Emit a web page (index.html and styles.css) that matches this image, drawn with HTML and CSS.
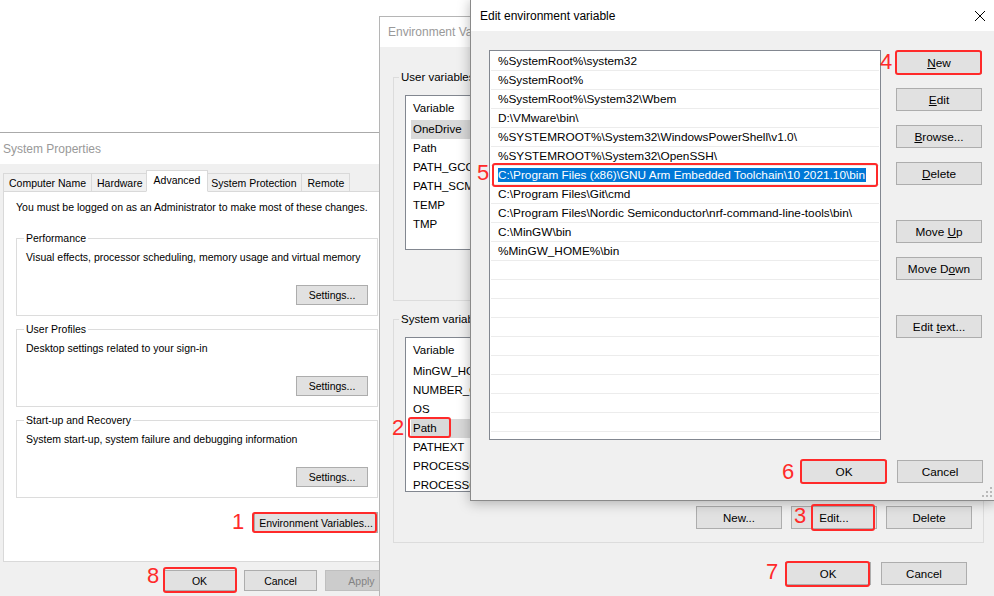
FILE: index.html
```html
<!DOCTYPE html>
<html lang="en">

<head>
    <meta charset="UTF-8">
    <meta name="viewport" content="width=device-width, initial-scale=1.0">
    <title>Environment Variables</title>
    <link rel="stylesheet" href="styles.css">
</head>

<body>
    <div class="desktop">

        <!-- System Properties -->
        <div class="win sysprops">
            <div class="titlebar">System Properties</div>
            <div class="body">
                <ul class="tabs">
                    <li>Computer Name</li>
                    <li>Hardware</li>
                    <li class="active">Advanced</li>
                    <li>System Protection</li>
                    <li>Remote</li>
                </ul>
                <div class="tabpanel">
                    <p class="note">You must be logged on as an Administrator to make most of these changes.</p>
                    <fieldset class="group">
                        <legend>Performance</legend>
                        <p>Visual effects, processor scheduling, memory usage and virtual memory</p>
                        <div class="btnrow"><button class="btn">Settings...</button></div>
                    </fieldset>
                    <fieldset class="group">
                        <legend>User Profiles</legend>
                        <p>Desktop settings related to your sign-in</p>
                        <div class="btnrow"><button class="btn">Settings...</button></div>
                    </fieldset>
                    <fieldset class="group">
                        <legend>Start-up and Recovery</legend>
                        <p>System start-up, system failure and debugging information</p>
                        <div class="btnrow"><button class="btn">Settings...</button></div>
                    </fieldset>
                    <div class="btnrow envrow"><button class="btn wide">Environment Variables...</button></div>
                </div>
                <div class="btnrow footer">
                    <button class="btn">OK</button>
                    <button class="btn">Cancel</button>
                    <button class="btn" disabled>Apply</button>
                </div>
            </div>
        </div>

        <!-- Environment Variables -->
        <div class="win envvars">
            <div class="titlebar">Environment Variables</div>
            <div class="body">
                <fieldset class="group">
                    <legend>User variables for user</legend>
                    <div class="lv">
                        <div class="lv-head">Variable</div>
                        <ul>
                            <li class="sel">OneDrive</li>
                            <li>Path</li>
                            <li>PATH_GCC</li>
                            <li>PATH_SCM</li>
                            <li>TEMP</li>
                            <li>TMP</li>
                        </ul>
                    </div>
                    <div class="btnrow">
                        <button class="btn">New...</button>
                        <button class="btn">Edit...</button>
                        <button class="btn">Delete</button>
                    </div>
                </fieldset>
                <fieldset class="group">
                    <legend>System variables</legend>
                    <div class="lv">
                        <div class="lv-head">Variable</div>
                        <ul>
                            <li>MinGW_HOME</li>
                            <li>NUMBER_OF_PROCESSORS</li>
                            <li>OS</li>
                            <li class="sel">Path</li>
                            <li>PATHEXT</li>
                            <li>PROCESSOR_ARCHITECTURE</li>
                            <li>PROCESSOR_IDENTIFIER</li>
                        </ul>
                    </div>
                    <div class="btnrow">
                        <button class="btn">New...</button>
                        <button class="btn">Edit...</button>
                        <button class="btn">Delete</button>
                    </div>
                </fieldset>
                <div class="btnrow footer">
                    <button class="btn">OK</button>
                    <button class="btn">Cancel</button>
                </div>
            </div>
        </div>

        <!-- Edit environment variable -->
        <div class="win editenv">
            <div class="titlebar">
                <span>Edit environment variable</span>
                <svg class="close" width="10" height="10" viewBox="0 0 10 10">
                    <path d="M0 0L10 10M10 0L0 10" stroke="#000" stroke-width="1" fill="none" />
                </svg>
            </div>
            <div class="body">
                <div class="main">
                    <ul class="pathlist">
                        <li>%SystemRoot%\system32</li>
                        <li>%SystemRoot%</li>
                        <li>%SystemRoot%\System32\Wbem</li>
                        <li>D:\VMware\bin\</li>
                        <li>%SYSTEMROOT%\System32\WindowsPowerShell\v1.0\</li>
                        <li>%SYSTEMROOT%\System32\OpenSSH\</li>
                        <li class="editing"><span>C:\Program Files (x86)\GNU Arm Embedded Toolchain\10 2021.10\bin</span></li>
                        <li>C:\Program Files\Git\cmd</li>
                        <li>C:\Program Files\Nordic Semiconductor\nrf-command-line-tools\bin\</li>
                        <li>C:\MinGW\bin</li>
                        <li>%MinGW_HOME%\bin</li>
                        <li></li>
                        <li></li>
                        <li></li>
                        <li></li>
                        <li></li>
                        <li></li>
                        <li></li>
                        <li></li>
                        <li></li>
                        <li></li>
                    </ul>
                    <div class="side">
                        <button class="btn"><u>N</u>ew</button>
                        <button class="btn"><u>E</u>dit</button>
                        <button class="btn"><u>B</u>rowse...</button>
                        <button class="btn"><u>D</u>elete</button>
                        <button class="btn sep">Move <u>U</u>p</button>
                        <button class="btn">Move D<u>o</u>wn</button>
                        <button class="btn sep">Edit <u>t</u>ext...</button>
                    </div>
                </div>
                <div class="btnrow footer">
                    <button class="btn">OK</button>
                    <button class="btn">Cancel</button>
                </div>
            </div>
            <svg class="grip" width="12" height="12" viewBox="0 0 12 12">
                <g fill="#b9b9b9">
                    <rect x="9" y="1" width="2" height="2" />
                    <rect x="9" y="5" width="2" height="2" />
                    <rect x="5" y="5" width="2" height="2" />
                    <rect x="9" y="9" width="2" height="2" />
                    <rect x="5" y="9" width="2" height="2" />
                    <rect x="1" y="9" width="2" height="2" />
                </g>
            </svg>
        </div>

        <!-- red step marks drawn over the windows -->
        <span class="step s1">1</span><span class="mark m1"></span>
        <span class="step s2">2</span><span class="mark m2"></span>
        <span class="step s3">3</span><span class="mark m3"></span>
        <span class="step s4">4</span><span class="mark m4"></span>
        <span class="step s5">5</span><span class="mark m5"></span>
        <span class="step s6">6</span><span class="mark m6"></span>
        <span class="step s7">7</span><span class="mark m7"></span>
        <span class="step s8">8</span><span class="mark m8"></span>
    </div>
</body>

</html>
```

FILE: styles.css
```css
* {
    margin: 0;
    padding: 0;
    box-sizing: border-box;
}

ul li {
    list-style: none;
}

body {
    background: #fff;
    color: #000;
    font-family: "Liberation Sans", Arial, sans-serif;
    overflow: hidden;
}

.desktop {
    position: relative;
    width: 994px;
    height: 596px;
    overflow: hidden;
}

/* windows */
.win {
    position: absolute;
    display: flex;
    flex-direction: column;
    background: #f0f0f0;
}

.titlebar {
    flex: none;
    display: flex;
    align-items: center;
    background: #fff;
    font-size: 12px;
}

.body {
    flex: 1;
    display: flex;
    flex-direction: column;
}

.btn {
    flex: none;
    width: 86px;
    height: 23px;
    font: inherit;
    color: #000;
    background: #e1e1e1;
    border: 1px solid #adadad;
}

.btn:disabled {
    color: #838383;
    background: #cccccc;
    border-color: #bfbfbf;
}

.btnrow {
    display: flex;
    justify-content: flex-end;
}

.group {
    min-width: 0;
    border: 1px solid #dcdcdc;
}

.group legend {
    line-height: 14px;
    padding: 0 2px;
}

/* System Properties */
.sysprops {
    left: -6px;
    top: 132px;
    width: 412px;
    height: 480px;
    border: 1px solid #aaa;
    font-size: 10.5px;
}

.sysprops .titlebar {
    height: 31px;
    padding-left: 8px;
    color: #999;
}

.sysprops .body {
    padding: 0 7px 0 8px;
}

.tabs {
    display: flex;
    align-items: flex-end;
    height: 22px;
    margin-top: 6px;
    margin-bottom: -1px;
    position: relative;
    z-index: 1;
}

.tabs li {
    display: flex;
    align-items: center;
    height: 19px;
    padding: 0 5px;
    border: 1px solid #d9d9d9;
}

.tabs li + li {
    margin-left: -1px;
}

.tabs li.active {
    position: relative;
    height: 22px;
    padding: 0 7px 3px;
    margin: 0 -2px 0 -3px;
    background: #fff;
    border-bottom-color: #fff;
}

.tabpanel {
    height: 371px;
    padding: 8px 19px 0 12px;
    background: #fff;
    border: 1px solid #d9d9d9;
}

.note {
    line-height: 14px;
    margin-bottom: 17px;
}

.sysprops .group {
    padding: 5px 9px 10px 9px;
}

.sysprops .group + .group {
    margin-top: 6px;
}

.sysprops .group legend {
    margin-left: -2px;
}

.sysprops .group p {
    line-height: 14px;
}

.sysprops .group .btnrow {
    margin-top: 21px;
}

.sysprops .group .btn {
    width: 72px;
    height: 20px;
}

.envrow {
    margin-top: 14px;
}

.envrow .btn {
    width: 124px;
    height: 21px;
}

.sysprops .footer {
    gap: 8px;
    margin-top: 8px;
}

.sysprops .footer .btn {
    width: 73px;
    height: 21px;
}

/* Environment Variables */
.envvars {
    left: 379px;
    top: 16px;
    width: 617px;
    height: 600px;
    border: 1px solid #b5b5b5;
    font-size: 11.5px;
}

.envvars .titlebar {
    height: 30px;
    padding-left: 8px;
    color: #999;
}

.envvars .body {
    padding: 23px 11px 0 13px;
}

.envvars .group {
    padding: 11px 11px 13px 11px;
}

.envvars .group:first-child {
    padding-bottom: 15px;
}

.envvars .group + .group {
    margin-top: 11px;
}

.envvars .group legend {
    margin-left: -6px;
}

.lv {
    height: 155px;
    overflow: hidden;
    background: #fff;
    border: 1px solid #828790;
}

.lv-head {
    height: 24px;
    line-height: 25px;
    padding-left: 7px;
}

.lv li {
    height: 19px;
    line-height: 19px;
    margin-left: 5px;
    padding-left: 2px;
    white-space: nowrap;
}

.lv li.sel {
    background: #d9d9d9;
}

.envvars .group .btnrow {
    gap: 9px;
    margin-top: 14px;
}

.envvars .group:first-child .btnrow {
    margin-top: 12px;
}

.envvars .footer {
    gap: 10px;
    margin-top: 19px;
    padding-right: 17px;
}

/* Edit environment variable */
.editenv {
    left: 470px;
    top: -1px;
    width: 526px;
    height: 502px;
    border: 1px solid #8a8a8a;
    box-shadow: 0 2px 12px rgba(0, 0, 0, 0.28);
    font-size: 11.8px;
}

.editenv .titlebar {
    height: 31px;
    justify-content: space-between;
    padding: 0 10px 0 9px;
}

.editenv .body {
    padding: 19px 12px 0 18px;
}

.main {
    display: flex;
    gap: 15px;
}

.pathlist {
    width: 392px;
    height: 390px;
    overflow: hidden;
    padding-top: 1px;
    background: #fff;
    border: 1px solid #828790;
}

.pathlist li {
    height: 19px;
    line-height: 19px;
    margin: 0 1px;
    padding-left: 7px;
    border-bottom: 1px solid #ececec;
    white-space: nowrap;
}

.pathlist li.editing span {
    display: inline-block;
    line-height: 14px;
    padding-right: 1px;
    color: #fff;
    background: #0078d7;
}

.side {
    display: flex;
    flex-direction: column;
    gap: 14px;
    padding-top: 1px;
}

.side .sep {
    margin-top: 21px;
}

.editenv .footer {
    gap: 10px;
    margin-top: 20px;
}

.grip {
    position: absolute;
    right: 2px;
    bottom: 2px;
}

/* red step marks */
.step {
    position: absolute;
    font-size: 22px;
    line-height: 22px;
    color: #ff2a2a;
}

.mark {
    position: absolute;
    border: 2px solid #ff2a2a;
    border-radius: 3px;
}

.s1 { left: 232px; top: 511px; }
.s2 { left: 392px; top: 417px; }
.s3 { left: 794px; top: 505px; }
.s4 { left: 880px; top: 51px; }
.s5 { left: 477px; top: 162px; }
.s6 { left: 782px; top: 461px; }
.s7 { left: 766px; top: 561px; }
.s8 { left: 147px; top: 565px; }

.m1 { left: 252px; top: 512px; width: 125px; height: 21px; }
.m2 { left: 408px; top: 417px; width: 43px; height: 21px; }
.m3 { left: 811px; top: 504px; width: 64px; height: 27px; }
.m4 { left: 895px; top: 50px; width: 87px; height: 25px; }
.m5 { left: 492px; top: 163px; width: 386px; height: 24px; }
.m6 { left: 800px; top: 459px; width: 87px; height: 25px; }
.m7 { left: 785px; top: 561px; width: 85px; height: 26px; }
.m8 { left: 163px; top: 567px; width: 74px; height: 26px; }
```
